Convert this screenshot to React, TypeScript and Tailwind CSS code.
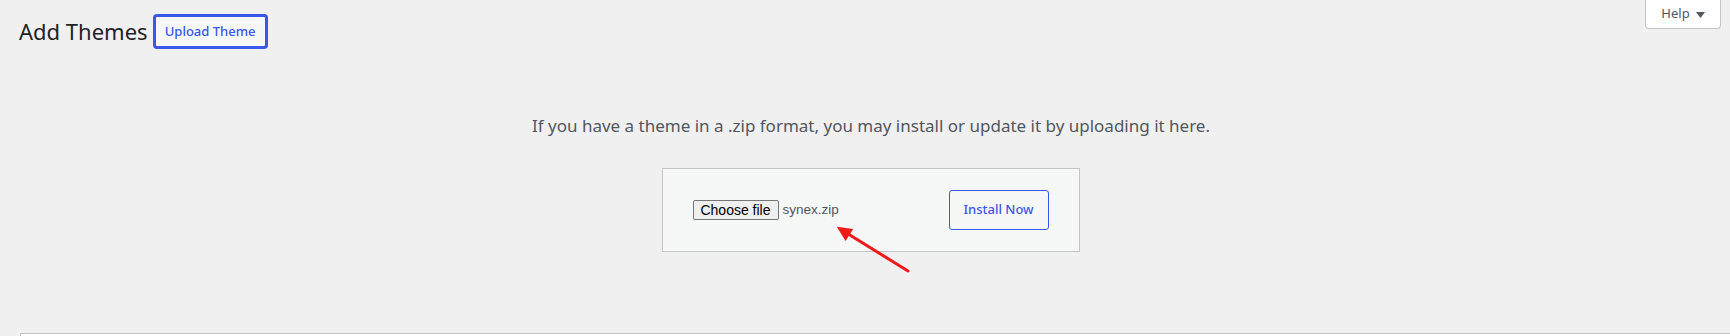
import React from 'react';

const font = { fontFamily: '"Noto Sans", "Open Sans", sans-serif' };

const App: React.FC = () => {
  return (
    <div className="relative w-[1730px] h-[336px] overflow-hidden bg-[#f0f0f1] text-[#3c434a]" style={font}>
      {/* Top row: title + help tab */}
      <div className="flex items-start justify-between">
        <div className="flex items-center pl-[19px] pt-[14px] h-[49px]">
          <h1 className="text-[22px] font-normal leading-[35px] text-[#1d2327]">Add Themes</h1>
          <button className="ml-[5px] h-[35px] w-[115px] rounded-[4px] border-[3px] border-[#3858e9] bg-[#f6f7f7] text-[13px] font-medium text-[#3858e9]">
            Upload Theme
          </button>
        </div>
        <button className="mr-[9px] flex h-[29px] w-[76px] items-center justify-center gap-[6px] rounded-b-[4px] border border-t-0 border-[#c3c4c7] bg-white text-[13px] text-[#50575e]">
          <span>Help</span>
          <svg width="9" height="6" viewBox="0 0 9 6" className="mt-[1px]">
            <path d="M0 0 H9 L4.5 6 Z" fill="#50575e" />
          </svg>
        </button>
      </div>

      {/* Upload panel */}
      <p className="mt-[63px] text-center text-[17px] leading-[27px] text-[#50575e] pl-[12px]">
        If you have a theme in a .zip format, you may install or update it by uploading it here.
      </p>
      <div className="mt-[29px] flex justify-center pl-[11px]">
        <form className="flex h-[84px] w-[418px] items-center justify-between border border-[#c3c4c7] bg-[#f6f7f7] px-[30px]">
          <div className="flex items-center">
            <span
              className="flex h-[20px] w-[86px] items-center justify-center rounded-[2px] border border-[#767676] bg-[#efefef] text-[14px] text-black"
              style={{ fontFamily: '"Liberation Sans", Arial, sans-serif' }}
            >
              Choose file
            </span>
            <span
              className="ml-[4px] text-[13.5px] text-[#50575e]"
              style={{ fontFamily: '"Liberation Sans", Arial, sans-serif' }}
            >
              synex.zip
            </span>
          </div>
          <button
            type="button"
            className="h-[40px] w-[100px] rounded-[3px] border border-[#3858e9] bg-[#f6f7f7] text-[13px] font-medium text-[#3858e9]"
          >
            Install Now
          </button>
        </form>
      </div>

      {/* Themes list edge */}
      <div className="ml-[20px] mt-[81px] h-[20px] border-l border-t border-[#c3c4c7] bg-white" />

      {/* Annotation arrow */}
      <svg className="pointer-events-none absolute left-0 top-0" width="1730" height="336">
        <line x1="908" y1="271" x2="849" y2="234.5" stroke="#ef1a1a" strokeWidth="3" strokeLinecap="round" />
        <polygon points="836.7,226.7 853.2,229 845.6,241" fill="#ef1a1a" />
      </svg>
    </div>
  );
};

export default App;
